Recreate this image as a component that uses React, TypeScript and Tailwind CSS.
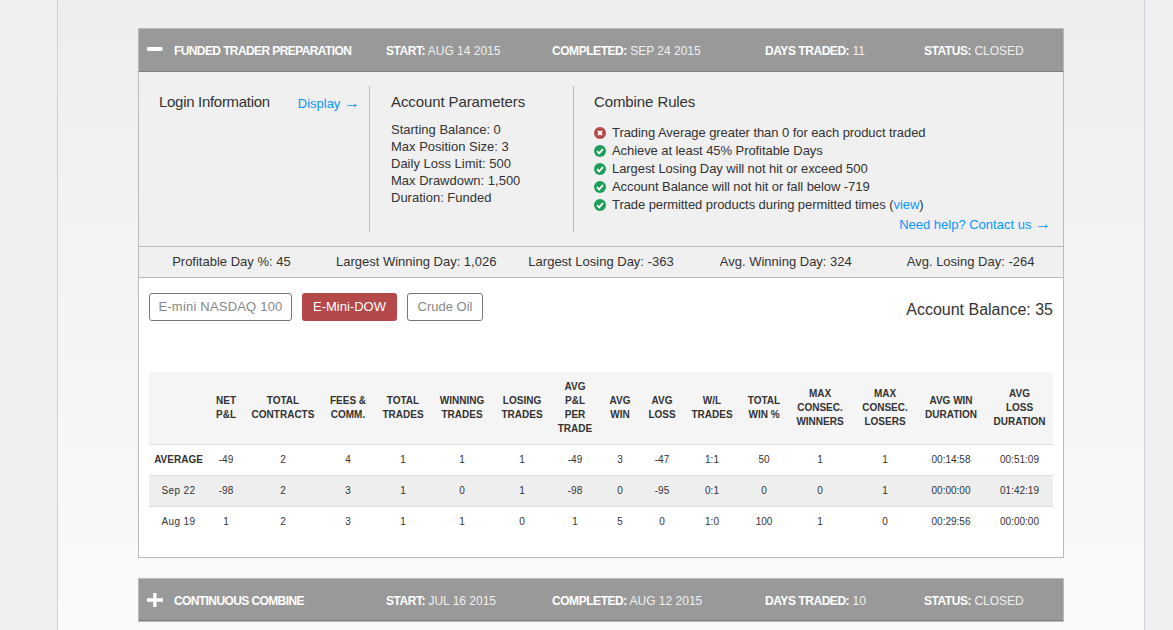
const font = "font-['Liberation_Sans',Arial,sans-serif]";

function BarItem({ label, value, className }: { label: string; value: string; className: string }) {
  return (
    <div className={className}>
      <span className="font-bold tracking-[-0.45px]">{label}</span> <span className="text-[#f0f0f0]">{value}</span>
    </div>
  );
}

function Bar({ open, title, start, completed, days }: { open: boolean; title: string; start: string; completed: string; days: string }) {
  return (
    <div className={`flex h-11 items-center border border-[#bbb] bg-[#999] pt-[1px] text-[12px] text-white ${open ? "border-b-[#808080]" : "shadow-[inset_0_-1px_0_#808080]"}`}>
      <div className="w-[35px] shrink-0 pl-[8px]">
        <svg width="16" height="16" viewBox="0 0 16 16" fill="#fff" className={open ? "-mt-[1px]" : "-mt-[2px]"}>
          {open ? <rect x="0" y="5" width="15.5" height="4" rx="1.2" /> : <path d="M6.2 1h3.3v5.3H16v3.4H9.5V15H6.2V9.7H0V6.3h6.2z" />}
        </svg>
      </div>
      <div className="w-[212px] shrink-0 font-bold tracking-[-0.6px]">{title}</div>
      <BarItem label="START:" value={start} className="w-[166px] shrink-0" />
      <BarItem label="COMPLETED:" value={completed} className="w-[213px] shrink-0" />
      <BarItem label="DAYS TRADED:" value={days} className="w-[159px] shrink-0" />
      <BarItem label="STATUS:" value="CLOSED" className="shrink-0" />
    </div>
  );
}

function RuleIcon({ ok }: { ok: boolean }) {
  return (
    <svg width="12" height="12" viewBox="0 0 12 12" className="mr-[6px] shrink-0">
      <circle cx="6" cy="6" r="6" fill={ok ? "#1e9e5a" : "#b54848"} />
      {ok ? (
        <path d="M3 6.2l2.1 2.1L9 4.2" fill="none" stroke="#fff" strokeWidth="1.9" />
      ) : (
        <path d="M4 4l4 4M8 4l-4 4" fill="none" stroke="#fff" strokeWidth="1.8" />
      )}
    </svg>
  );
}

function Arrow() {
  return <span className="text-[16px] leading-none">→</span>;
}

const rules = [
  { ok: false, text: "Trading Average greater than 0 for each product traded" },
  { ok: true, text: "Achieve at least 45% Profitable Days" },
  { ok: true, text: "Largest Losing Day will not hit or exceed 500" },
  { ok: true, text: "Account Balance will not hit or fall below -719" },
];

const params = ["Starting Balance: 0", "Max Position Size: 3", "Daily Loss Limit: 500", "Max Drawdown: 1,500", "Duration: Funded"];
const stats = ["Profitable Day %: 45", "Largest Winning Day: 1,026", "Largest Losing Day: -363", "Avg. Winning Day: 324", "Avg. Losing Day: -264"];

const colWidths = ["w-[59px]", "w-[36px]", "w-[78px]", "w-[52px]", "w-[58px]", "w-[60px]", "w-[60px]", "w-[46px]", "w-[44px]", "w-[40px]", "w-[60px]", "w-[44px]", "w-[68px]", "w-[62px]", "w-[70px]", "w-[67px]"];
const heads = [
  [""],
  ["NET", "P&L"],
  ["TOTAL", "CONTRACTS"],
  ["FEES &", "COMM."],
  ["TOTAL", "TRADES"],
  ["WINNING", "TRADES"],
  ["LOSING", "TRADES"],
  ["AVG", "P&L", "PER", "TRADE"],
  ["AVG", "WIN"],
  ["AVG", "LOSS"],
  ["W/L", "TRADES"],
  ["TOTAL", "WIN %"],
  ["MAX", "CONSEC.", "WINNERS"],
  ["MAX", "CONSEC.", "LOSERS"],
  ["AVG WIN", "DURATION"],
  ["AVG", "LOSS", "DURATION"],
];
const rows = [
  ["AVERAGE", "-49", "2", "4", "1", "1", "1", "-49", "3", "-47", "1:1", "50", "1", "1", "00:14:58", "00:51:09"],
  ["Sep 22", "-98", "2", "3", "1", "0", "1", "-98", "0", "-95", "0:1", "0", "0", "1", "00:00:00", "01:42:19"],
  ["Aug 19", "1", "2", "3", "1", "1", "0", "1", "5", "0", "1:0", "100", "1", "0", "00:29:56", "00:00:00"],
];

export default function App() {
  return (
    <div className={`${font} h-[630px] overflow-hidden bg-[#eef0f2] text-[#333]`}>
      <div className="ml-[57px] mr-[28px] h-full border-x border-[#d0d0d4] bg-gradient-to-b from-[#eeeeee] to-[#fafafa] px-[80px] pt-[28px]">
        <Bar open title="FUNDED TRADER PREPARATION" start="AUG 14 2015" completed="SEP 24 2015" days="11" />

        <div className="border-x border-b border-[#bbb] bg-white">
          <div className="flex h-[174px] bg-[#f0f0f0] pt-[14px]">
            <div className="flex h-[146px] w-[231px] shrink-0 justify-between border-r border-[#bbb] pl-5 pr-[9px]">
              <div className="text-[15px] leading-[32px] tracking-[-0.3px]">Login Information</div>
              <div className="pt-[1px] text-[13px] leading-[34px] text-[#0a96ff]">Display <Arrow /></div>
            </div>
            <div className="h-[146px] w-[204px] shrink-0 border-r border-[#bbb] pl-[21px]">
              <div className="text-[15px] leading-[32px] tracking-[-0.1px]">Account Parameters</div>
              <div className="pt-[3px] text-[13px] leading-[17px]">
                {params.map((p) => (
                  <div key={p}>{p}</div>
                ))}
              </div>
            </div>
            <div className="flex-1 pl-5 pr-[12px]">
              <div className="text-[15px] leading-[32px] tracking-[-0.1px]">Combine Rules</div>
              <div className="pt-[6px] text-[13px] leading-[18px] tracking-[-0.07px]">
                {rules.map((r) => (
                  <div key={r.text} className="flex items-center">
                    <RuleIcon ok={r.ok} />
                    {r.text}
                  </div>
                ))}
                <div className="flex items-center">
                  <RuleIcon ok />
                  <span>
                    Trade permitted products during permitted times (<span className="text-[#0a96ff]">view</span>)
                  </span>
                </div>
              </div>
              <div className="pt-[2px] text-right text-[13px] leading-[18px] text-[#0a96ff]">Need help? Contact us <Arrow /></div>
            </div>
          </div>

          <div className="grid h-[32px] grid-cols-5 items-center border-y border-[#bbb] bg-[#f0f0f0] text-center text-[13px]">
            {stats.map((s) => (
              <div key={s}>{s}</div>
            ))}
          </div>

          <div className="px-[10px] pb-[20px] pt-[15px]">
            <div className="flex h-[79px] items-start justify-between">
              <div className="flex gap-[10px] text-[13px]">
                <div className="flex h-[28px] w-[143px] items-center justify-center rounded-[3px] border border-[#777] tracking-[0.2px] text-[#888]">E-mini NASDAQ 100</div>
                <div className="flex h-[28px] w-[95px] items-center justify-center rounded-[3px] bg-[#b54848] text-white">E-Mini-DOW</div>
                <div className="flex h-[28px] w-[76px] items-center justify-center rounded-[3px] border border-[#777] text-[#888]">Crude Oil</div>
              </div>
              <div className="pt-[1px] text-[16px] leading-[32px]">Account Balance: 35</div>
            </div>

            <table className="w-[904px] table-fixed border-collapse text-center text-[10px] leading-[14px]">
              <thead>
                <tr className="h-[72px] border-b border-[#ddd] bg-[#f5f5f5] font-bold">
                  {heads.map((h, i) => (
                    <th key={i} className={`${colWidths[i]} p-0 font-bold`}>
                      {h.map((line, j) => (
                        <div key={j} className="whitespace-nowrap">{line}</div>
                      ))}
                    </th>
                  ))}
                </tr>
              </thead>
              <tbody>
                {rows.map((row, i) => (
                  <tr key={row[0]} className={`h-[31px] ${i === 2 ? "" : "border-b border-[#ddd]"} ${i === 1 ? "bg-[#eee]" : ""}`}>
                    {row.map((cell, j) => (
                      <td key={j} className={`p-0 ${j === 0 ? (i === 0 ? "font-bold" : "tracking-[0.4px]") : ""}`}>{cell}</td>
                    ))}
                  </tr>
                ))}
              </tbody>
            </table>
          </div>
        </div>

        <div className="mt-[20px]">
          <Bar open={false} title="CONTINUOUS COMBINE" start="JUL 16 2015" completed="AUG 12 2015" days="10" />
        </div>
      </div>
    </div>
  );
}
